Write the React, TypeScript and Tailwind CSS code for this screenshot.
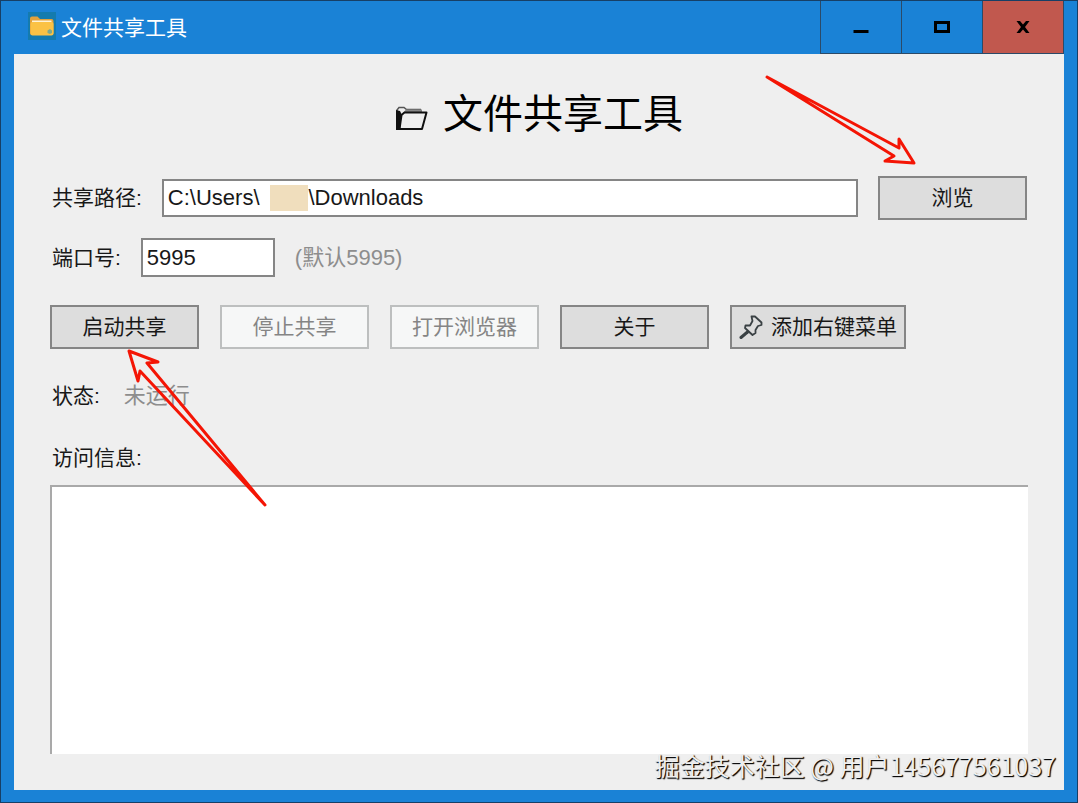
import { useState } from "react";
import type { ReactNode } from "react";

function TitleFolder() {
  return (
    <svg width="28" height="28" viewBox="0 0 28 28" aria-hidden="true">
      <rect width="28" height="28" fill="#147bae" />
      <path d="M2 6.500q0-2 2-2h5.500l2.500 2.500h11.500q2 0 2 2v12q0 2-2 2h-19.500q-2 0-2-2z" fill="#e3a13a" />
      <path d="M4 8.500h19.500v5H4z" fill="#fff3d6" />
      <path d="M2.500 12q0-2 2-2h19q2 0 2 2v9.500q0 2-2 2h-19q-2 0-2-2z" fill="#fbc244" />
      <path d="M19.500 18.500l2.500-1.500 2 1.500v2.500l-2 1-2.500-1z" fill="#7fa98c" />
    </svg>
  );
}

function HeadingFolder() {
  return (
    <svg width="34" height="28" viewBox="0 0 34 28" fill="none" aria-hidden="true">
      <path d="M2 25V6L4 3.500H9L11.500 5.500H26" stroke="#555" strokeWidth="1.500" />
      <path d="M7 10L11 5.500H27V8.500H10z" fill="#858585" />
      <path d="M1 6L1 26H5L6.500 10L5 7z" fill="#111" />
      <path d="M6.500 11L9.500 8.500H31.500L27 25H4.500Z" stroke="#111" strokeWidth="2" strokeLinejoin="round" />
    </svg>
  );
}

function Pin() {
  return (
    <svg width="24" height="24" viewBox="0 0 24 24" fill="none" stroke="#3a4144" strokeWidth="1.800" strokeLinejoin="round" strokeLinecap="round" aria-hidden="true">
      <path d="M12.500 1.500L16 1.500L22.500 7.500V10L19 11L16.500 15V18L13.500 20L6 13L6.500 10.500H11L13.500 6Z" />
      <path d="M8.500 17L2 22.500" strokeWidth="3" />
    </svg>
  );
}

function WindowButton({ label, danger, children }: { label: string; danger?: boolean; children: ReactNode }) {
  return (
    <button
      type="button"
      aria-label={label}
      className={`flex h-full items-center justify-center border-b border-l border-[#2b4a68] ${danger ? "w-[82px] border-r bg-[#c1584e]" : "w-[81px] bg-[#1a82d6]"}`}
    >
      {children}
    </button>
  );
}

function ActionButton({ disabled, wide, children }: { disabled?: boolean; wide?: boolean; children: ReactNode }) {
  return (
    <button
      type="button"
      disabled={disabled}
      className={`flex h-11 shrink-0 items-center justify-center gap-2 border-2 whitespace-nowrap ${wide ? "w-44" : "w-[149px]"} ${
        disabled ? "border-[#bdbfbf] bg-[#f6f7f7] text-[#858585]" : "border-[#858585] bg-[#dddddd] text-[#181818]"
      }`}
    >
      {children}
    </button>
  );
}

export default function App() {
  const [path, setPath] = useState("C:\\Users\\" + "\u00a0".repeat(8) + "\\Downloads");
  const [port, setPort] = useState("5995");

  return (
    <div className="flex min-h-screen flex-col border border-[#173f66] bg-[#1a82d6] px-[13px] pb-3 font-['Liberation_Sans','Noto_Sans_CJK_SC',sans-serif] text-[21px] leading-[30px] text-[#181818]">
      <header className="flex h-[53px] items-center justify-between">
        <div className="flex items-center gap-[5px] pb-1 pl-[14px] font-['Noto_Sans_CJK_SC',sans-serif] text-white">
          <TitleFolder />
          <span>文件共享工具</span>
        </div>
        <div className="flex h-full">
          <WindowButton label="最小化">
            <svg width="16" height="14" viewBox="0 0 16 14" aria-hidden="true">
              <path d="M0.500 10h15v3h-15z" fill="#000" />
            </svg>
          </WindowButton>
          <WindowButton label="最大化">
            <svg width="16" height="12" viewBox="0 0 16 12" aria-hidden="true">
              <rect x="1.500" y="1.500" width="13" height="9" fill="none" stroke="#000" strokeWidth="3" />
            </svg>
          </WindowButton>
          <WindowButton label="关闭" danger>
            <svg width="14" height="12" viewBox="0 0 14 12" aria-hidden="true">
              <path d="M0.500 0h3.500L7 3.500L10 0H13.500L9 6l4.500 6H10L7 8.500L4 12H0.500L5 6z" fill="#000" />
            </svg>
          </WindowButton>
        </div>
      </header>

      <main className="relative flex flex-1 flex-col bg-[#efefef] px-9 pt-9 pb-9">
        <h1 className="flex h-12 items-center justify-center gap-[14px] text-[40px] leading-[48px] text-black">
          <span className="pt-2">
            <HeadingFolder />
          </span>
          文件共享工具
        </h1>

        <div className="mt-[38px] flex items-center">
          <label htmlFor="share-path" className="shrink-0 pl-0.5">共享路径:</label>
          <div className="relative ml-5 flex-1">
            <input
              id="share-path"
              value={path}
              onChange={(e) => setPath(e.target.value)}
              className="block h-[38px] w-full border-2 border-[#858585] bg-white px-1 text-[22px] outline-none"
            />
            <span className="absolute top-1.5 left-[108px] h-[26px] w-[38px] bg-[#f0debd]" />
          </div>
          <div className="relative ml-5 pr-px">
            <ActionButton>浏览</ActionButton>
            <svg className="pointer-events-none absolute -top-[106px] -left-[118px]" width="160" height="100" viewBox="0 0 160 100" fill="none" aria-hidden="true">
              <path d="M7 7L139 78L139 69L154 93L125 91L134 86Z" stroke="#f41505" strokeWidth="3" strokeLinejoin="round" />
            </svg>
          </div>
        </div>

        <div className="mt-[18px] flex items-center">
          <label htmlFor="port" className="shrink-0 pl-0.5">端口号:</label>
          <input
            id="port"
            value={port}
            onChange={(e) => setPort(e.target.value)}
            className="ml-5 block h-[39px] w-[134px] border-2 border-[#858585] bg-white px-1 text-[22px] outline-none"
          />
          <span className="ml-5 text-[22px] text-[#8d8d8d]">(默认5995)</span>
        </div>

        <div className="mt-7 flex gap-[21px]">
          <div className="relative">
            <ActionButton>启动共享</ActionButton>
            <svg className="pointer-events-none absolute top-10 left-[70px] z-10" width="160" height="170" viewBox="0 0 160 170" fill="none" aria-hidden="true">
              <path d="M145 160L27 18L38 17L9 6L18 36L20 26Z" stroke="#f41505" strokeWidth="3" strokeLinejoin="round" />
            </svg>
          </div>
          <ActionButton disabled>停止共享</ActionButton>
          <ActionButton disabled>打开浏览器</ActionButton>
          <ActionButton>关于</ActionButton>
          <ActionButton wide>
            <Pin />
            添加右键菜单
          </ActionButton>
        </div>

        <div className="mt-8 flex gap-6 pl-0.5">
          <span>状态:</span>
          <span className="text-[22px] text-[#8d8d8d]">未运行</span>
        </div>

        <label htmlFor="access-info" className="mt-8 pl-0.5">访问信息:</label>
        <textarea
          id="access-info"
          readOnly
          className="mt-3 block min-h-40 w-full flex-1 resize-none border-t-2 border-l-2 border-[#a9a9a9] bg-white p-2 outline-none"
        />

        <div className="absolute right-2 bottom-[7px] font-['Noto_Sans_CJK_SC',sans-serif] text-[25px] leading-9 text-[#efefef] [text-shadow:1px_1px_1px_#000,1px_1px_1px_#555]">
          掘金技术社区 @ 用户145677561037
        </div>
      </main>
    </div>
  );
}
